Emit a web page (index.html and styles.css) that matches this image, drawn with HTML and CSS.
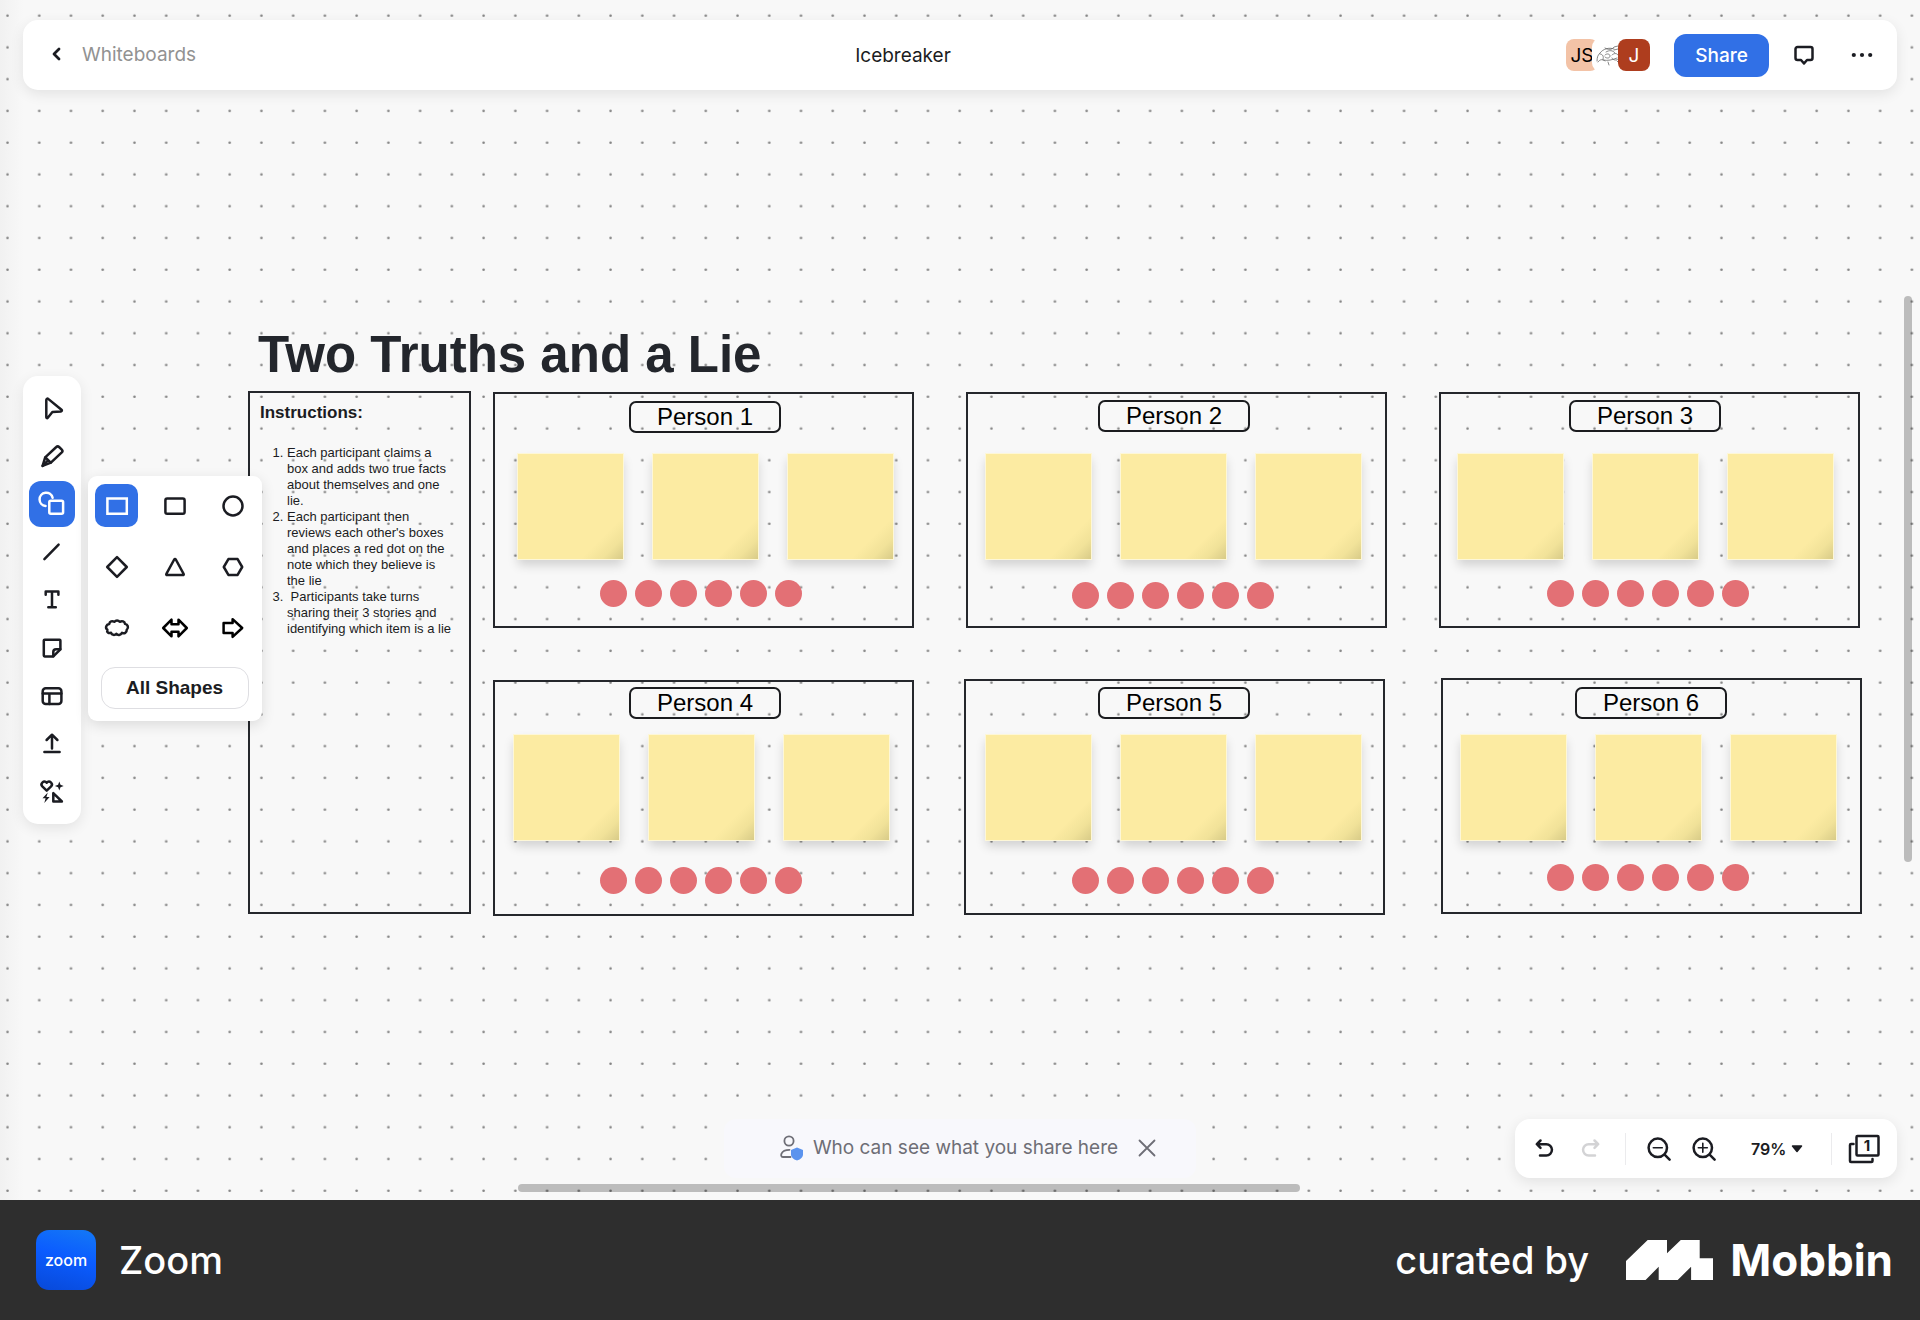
FILE: index.html
```html
<!DOCTYPE html>
<html lang="en">

<head>
    <meta charset="UTF-8">
    <meta name="viewport" content="width=device-width, initial-scale=1.0">
    <title>Icebreaker - Whiteboards</title>
    <link rel="stylesheet" href="styles.css">
</head>

<body>
    <main class="app">
        <!-- Canvas -->
        <div class="canvas">
            <svg class="grid-dots" width="100%" height="100%">
                <defs>
                    <pattern id="dots" width="31.74" height="31.76" patternUnits="userSpaceOnUse">
                        <circle cx="7.5" cy="15.6" r="1.3" fill="#858585" />
                    </pattern>
                </defs>
                <rect width="100%" height="100%" fill="url(#dots)" />
            </svg>

            <h1 class="board-title">Two Truths and a Lie</h1>

            <section class="instructions">
                <h2>Instructions:</h2>
                <ol>
                    <li>Each participant claims a box and adds two true facts about themselves and one lie.</li>
                    <li>Each participant then reviews each other's boxes and places a red dot on the note which they believe is the lie</li>
                    <li>&nbsp;Participants take turns sharing their 3 stories and identifying which item is a lie</li>
                </ol>
            </section>

            <div class="frame frame-1"></div>
            <div class="label label-1">Person 1</div>
            <div class="notes notes-1"><i></i><i></i><i></i></div>
            <div class="votes votes-1"><i></i><i></i><i></i><i></i><i></i><i></i></div>

            <div class="frame frame-2"></div>
            <div class="label label-2">Person 2</div>
            <div class="notes notes-2"><i></i><i></i><i></i></div>
            <div class="votes votes-2"><i></i><i></i><i></i><i></i><i></i><i></i></div>

            <div class="frame frame-3"></div>
            <div class="label label-3">Person 3</div>
            <div class="notes notes-3"><i></i><i></i><i></i></div>
            <div class="votes votes-3"><i></i><i></i><i></i><i></i><i></i><i></i></div>

            <div class="frame frame-4"></div>
            <div class="label label-4">Person 4</div>
            <div class="notes notes-4"><i></i><i></i><i></i></div>
            <div class="votes votes-4"><i></i><i></i><i></i><i></i><i></i><i></i></div>

            <div class="frame frame-5"></div>
            <div class="label label-5">Person 5</div>
            <div class="notes notes-5"><i></i><i></i><i></i></div>
            <div class="votes votes-5"><i></i><i></i><i></i><i></i><i></i><i></i></div>

            <div class="frame frame-6"></div>
            <div class="label label-6">Person 6</div>
            <div class="notes notes-6"><i></i><i></i><i></i></div>
            <div class="votes votes-6"><i></i><i></i><i></i><i></i><i></i><i></i></div>

            <div class="scroll-x"></div>
            <div class="scroll-y"></div>
        </div>

        <header class="topbar panel">
            <div class="topbar-left">
                <a href="#" class="back">
                    <svg width="10" height="16" viewBox="0 0 10 16"><path d="M7 3L2 8l5 5" /></svg>
                    Whiteboards
                </a>
            </div>
            <span class="doc-name">Icebreaker</span>
            <div class="topbar-right">
                <div class="avatars">
                    <span class="avatar avatar-js">JS</span>
                    <span class="avatar avatar-sketch">
                        <svg width="26" height="24" viewBox="0 0 26 24">
                            <path d="M2 18c0-4 1-6 3-8 3-4 9-6 14-4M3 19c2-3 5-3 7-1M10 5c3 2 7 2 9-1l4-1M11 9c3-2 7-2 9 1M10 12c2-2 5-1 5 1s-3 3-5 1M17 12c2-2 5-2 6 0M5 11c3 0 4 3 3 5M8 17c5 1 9 0 14-2M13 19l1 3M17 15c1 2 4 3 6 1M22 18l2 2M19 7l4-1" />
                        </svg>
                    </span>
                    <span class="avatar avatar-j">J</span>
                </div>
                <button type="button" class="share">Share</button>
                <button type="button" class="icon-btn" aria-label="Comments">
                    <svg width="24" height="24" viewBox="0 0 24 24"><path d="M5.500 4h13a2 2 0 0 1 2 2v9a2 2 0 0 1-2 2h-3.500l-3 3.500L9 17H5.500a2 2 0 0 1-2-2V6a2 2 0 0 1 2-2Z" /></svg>
                </button>
                <button type="button" class="icon-btn" aria-label="More">
                    <svg class="solid" width="24" height="24" viewBox="0 0 24 24"><circle cx="3.800" cy="12" r="2.100" /><circle cx="12" cy="12" r="2.100" /><circle cx="20.200" cy="12" r="2.100" /></svg>
                </button>
            </div>
        </header>

        <div class="middle">
            <nav class="toolbar panel">
                <button type="button" aria-label="Select"><svg viewBox="0 0 28 28"><path d="M8.300 6v17.200c0 1 .9 1.200 1.500.5L14.400 18l8.600-.6c1-.1 1.200-1 .5-1.600L10.200 4.900C9.400 4.200 8.300 4.800 8.300 6Z" /></svg></button>
                <button type="button" aria-label="Pen"><svg viewBox="0 0 28 28"><path d="M4.600 23.900l2.600-8.600L18.300 5a2 2 0 0 1 2.800 0l2.700 2.600a2 2 0 0 1 0 2.800L12.900 20.700Z" /><path d="M7.400 15.400l5.300 5.200M4.600 23.900l5.400-5.600" /></svg></button>
                <button type="button" class="active" aria-label="Shapes"><svg viewBox="0 0 28 28"><path d="M14.600 7.800A6.600 6.600 0 1 0 7.600 15.900" /><rect x="11.300" y="10.800" width="13.800" height="13" rx="1.500" /></svg></button>
                <button type="button" aria-label="Line"><svg viewBox="0 0 28 28"><path d="M6.400 21.200L20.600 6.600" /></svg></button>
                <button type="button" aria-label="Text"><svg viewBox="0 0 28 28"><path d="M7.700 8.800V5.400h12.700v3.400M14 5.400v15.800M10.300 21.200h7.500" /></svg></button>
                <button type="button" aria-label="Sticky note"><svg viewBox="0 0 28 28"><path d="M6.600 5.700h15a.8.8 0 0 1 .8.8v8.800l-7.100 7.100H6.600a.8.8 0 0 1-.8-.8V6.500a.8.8 0 0 1 .8-.8Z" /><path d="M15.300 22.300V18a2.800 2.800 0 0 1 2.800-2.800h4.200" /></svg></button>
                <button type="button" aria-label="Template"><svg viewBox="0 0 28 28"><rect x="4.700" y="6.300" width="18.700" height="15.600" rx="3" /><path d="M4.700 11.400h18.700M11.400 11.400v10.500" /></svg></button>
                <button type="button" aria-label="Upload"><svg viewBox="0 0 28 28"><path d="M14 5v13.500M8.600 10L14 4.700l5.400 5.300M6.400 22h15.200" /></svg></button>
                <button type="button" aria-label="Stickers"><svg viewBox="0 0 28 28"><path d="M8.700 12.600L4.300 8.400C1.800 5.600 6 1.600 8.700 4.700c2.700-3.100 6.900.9 4.400 3.700Z" /><path class="fill" d="M21.300 3.600l1.200 3.200 3.200 1.200-3.200 1.200-1.200 3.200-1.200-3.200L16.900 8l3.200-1.200ZM9.800 14.600l-5.300 5.700h3.100l-1.300 4.600 5.300-6h-3.200Z" /><path d="M15.300 15.100v8.400h8.600Z" /></svg></button>

                <div class="shapes">
                    <div class="shapes-grid">
                        <button type="button" class="active" aria-label="Rectangle"><svg viewBox="0 0 28 28"><path d="M4.400 6.600h19.400v15.200H4.400Z" stroke-linejoin="miter" /></svg></button>
                        <button type="button" aria-label="Rounded rectangle"><svg viewBox="0 0 28 28"><rect x="4.400" y="6.600" width="19.200" height="15.200" rx="1.800" /></svg></button>
                        <button type="button" aria-label="Circle"><svg viewBox="0 0 28 28"><circle cx="14" cy="14" r="9.500" /></svg></button>
                        <button type="button" aria-label="Diamond"><svg viewBox="0 0 28 28"><path d="M14 4.200l9.800 9.800-9.800 9.800L4.200 14Z" /></svg></button>
                        <button type="button" aria-label="Triangle"><svg viewBox="0 0 28 28"><path d="M13.200 6.500L5.400 20.800c-.4.700 0 1.200.8 1.200h15.600c.8 0 1.200-.5.8-1.200L14.800 6.500c-.4-.7-1.200-.7-1.600 0Z" /></svg></button>
                        <button type="button" aria-label="Hexagon"><svg viewBox="0 0 28 28"><path d="M9.400 6.100h9.200L23.200 14l-4.600 7.900H9.400L4.800 14Z" /></svg></button>
                        <button type="button" aria-label="Cloud"><svg viewBox="0 0 28 28"><path d="M6.300 9.900c.3-2.700 3-3.400 5-2.100 1.600-1.700 4-1.700 5.400 0 2.300-1.300 5-.4 5.300 2.100 2.700.6 4.200 3.600 1.700 6 .2 2.800-2.500 4.200-4.700 2.900-1.400 2.500-4.200 2.800-5.600 1-1.800 1.700-4.400 1.400-5.400-1-2.500.9-4.500-.7-3.600-3-2.400-1.900-1.400-5.500 1.900-5.900Z" /></svg></button>
                        <button type="button" aria-label="Double arrow"><svg class="dark" viewBox="0 0 28 28"><path d="M2.200 14l8.300-8.300v4.600h7V5.700l8.300 8.300-8.300 8.300v-4.600h-7v4.600Z" /></svg></button>
                        <button type="button" aria-label="Arrow"><svg class="dark" viewBox="0 0 28 28"><path d="M4.600 8.900h9V5.200l9.600 8.800-9.600 8.800v-3.700h-9Z" /></svg></button>
                    </div>
                    <button type="button" class="all-shapes">All Shapes</button>
                </div>
            </nav>
        </div>

        <div class="bottom">
            <div class="notice">
                <svg width="24" height="26" viewBox="0 0 24 26">
                    <circle cx="9" cy="6" r="4.600" />
                    <path d="M10.500 22H2.800C1 22 .9 20 1.500 18.600 2.600 16 5.600 14.800 9.500 14.800" />
                    <path class="shield" d="M17 12.500l6 2.500v4.300c0 3.400-3 5.500-6 6.200-3-.7-6-2.800-6-6.200V15Z" />
                </svg>
                <span>Who can see what you share here</span>
                <button type="button" aria-label="Close"><svg width="18" height="18" viewBox="0 0 18 18"><path d="M1.500 1.500l15 15M16.500 1.500l-15 15" /></svg></button>
            </div>

            <div class="controls panel">
                <button type="button" class="icon-btn" aria-label="Undo"><svg width="24" height="24" viewBox="0 0 24 24"><path d="M7.500 3.500L3.800 7.200l3.700 3.700M4 7.200h9.300a5.600 5.600 0 0 1 0 11.300H7" /></svg></button>
                <button type="button" class="icon-btn" aria-label="Redo" disabled><svg width="24" height="24" viewBox="0 0 24 24"><path d="M16.500 3.500l3.700 3.700-3.700 3.700M20 7.200h-9.300a5.600 5.600 0 0 0 0 11.300H17" /></svg></button>
                <span class="divider"></span>
                <button type="button" class="icon-btn" aria-label="Zoom out"><svg width="24" height="24" viewBox="0 0 24 24"><circle cx="10.800" cy="10.800" r="9.200" /><path d="M17.600 17.600l5 5" /><path class="thin" d="M6.300 10.800h9" /></svg></button>
                <button type="button" class="icon-btn" aria-label="Zoom in"><svg width="24" height="24" viewBox="0 0 24 24"><circle cx="10.800" cy="10.800" r="9.200" /><path d="M17.600 17.600l5 5" /><path class="thin" d="M6.300 10.800h9M10.800 6.300v9" /></svg></button>
                <label class="zoom-level">
                    <select aria-label="Zoom level">
                        <option>79%</option>
                        <option>100%</option>
                    </select>
                    <svg width="12" height="8" viewBox="0 0 12 8"><path d="M1.500 1h9L6 6.500Z" /></svg>
                </label>
                <span class="divider"></span>
                <button type="button" class="pages" aria-label="Pages">
                    <svg width="32" height="30" viewBox="0 0 32 30"><rect x="8.500" y="2" width="22" height="19.500" rx="1" /><path d="M5.500 10H3a1 1 0 0 0-1 1v16a1 1 0 0 0 1 1h20.500a1 1 0 0 0 1-1v-2" /></svg>
                    <span>1</span>
                </button>
            </div>
        </div>
    </main>

    <footer class="footer">
        <div class="brand">
            <span class="brand-logo">zoom</span>
            <span class="brand-name">Zoom</span>
        </div>
        <div class="credit">
            <span class="credit-by">curated by</span>
            <svg width="87" height="40" viewBox="0 0 87 40"><path d="M0 21L21.700 0H41v13.300L54.800 0h18.900v18.300H87V40H65.100V26.700L51.700 40h-19V26.700L19.600 40H0Z" /></svg>
            <span class="credit-name">Mobbin</span>
        </div>
    </footer>
</body>

</html>
```
FILE: styles.css
```css
* {
    box-sizing: border-box;
}

body {
    margin: 0;
    min-height: 100vh;
    display: flex;
    flex-direction: column;
    font-family: Inter, "Liberation Sans", sans-serif;
    color: #1b1c22;
}

button {
    border: none;
    background: none;
    padding: 0;
    font-family: inherit;
    color: inherit;
    cursor: pointer;
}

svg {
    display: block;
    fill: none;
    stroke: #1b1c22;
    stroke-width: 2.5;
    stroke-linecap: round;
    stroke-linejoin: round;
}

.app {
    flex: 1;
    position: relative;
    display: flex;
    flex-direction: column;
    padding: 20px 23px 22px;
    background: linear-gradient(to right, #f1f1f1, #f8f8f8 24px);
    overflow: hidden;
}

.panel {
    position: relative;
    background: #fff;
    border-radius: 15px;
    box-shadow: 0 4px 14px rgba(0, 0, 0, 0.09);
}

/* Top bar */
.topbar {
    display: flex;
    align-items: center;
    height: 70px;
    padding: 0 23px 0 29px;
    font-size: 19px;
}

.topbar-left {
    flex: 1;
}

.topbar-right {
    flex: 1;
    display: flex;
    align-items: center;
    justify-content: flex-end;
    margin-left: 120px;
}

.back {
    display: inline-flex;
    align-items: center;
    gap: 20px;
    color: #929292;
    text-decoration: none;
}

.back svg {
    stroke-width: 2.8;
}

.avatars {
    display: flex;
    margin-right: 24px;
}

.avatar {
    display: flex;
    align-items: center;
    justify-content: center;
    width: 32px;
    height: 32px;
    margin-left: -6px;
    border-radius: 8px;
    overflow: hidden;
}

.avatar-js {
    background: #f3c3a7;
    color: #000;
}

.avatar-sketch {
    background: #fff;
}

.avatar-sketch svg {
    stroke: #555;
    stroke-width: 0.7;
}

.avatar-j {
    background: #ae3d1e;
    color: #fff;
}

.share {
    width: 95px;
    height: 43px;
    margin-right: 23px;
    border-radius: 12px;
    background: #3170e6;
    color: #fff;
    font-size: 19px;
    font-weight: 500;
}

.icon-btn + .icon-btn {
    margin-left: 34px;
}

.topbar .icon-btn .solid {
    fill: #1b1c22;
    stroke: none;
}

/* Tools */
.middle {
    flex: 1;
    display: flex;
    align-items: center;
    padding-bottom: 9px;
}

.toolbar {
    display: flex;
    flex-direction: column;
    gap: 2px;
    padding: 9px 6px;
}

.toolbar > button {
    width: 46px;
    height: 46px;
    border-radius: 12px;
}

.toolbar button svg {
    width: 28px;
    height: 28px;
    margin: 0 auto;
}

.toolbar .active {
    background: #3170e6;
}

.toolbar .active svg {
    stroke: #fff;
}

.toolbar .fill {
    fill: #1b1c22;
    stroke: none;
}

.toolbar .dark {
    stroke: #000;
}

.shapes {
    position: absolute;
    left: 65px;
    top: 100px;
    width: 174px;
    padding: 8px 8px 12px 7px;
    background: #fff;
    border-radius: 9px;
    box-shadow: 0 4px 14px rgba(0, 0, 0, 0.12);
}

.shapes-grid {
    display: grid;
    grid-template-columns: repeat(3, 43px);
    gap: 18px 15px;
    margin-bottom: 18px;
}

.shapes-grid button {
    height: 43px;
    border-radius: 10px;
}

.all-shapes {
    display: block;
    width: 148px;
    height: 42px;
    margin: 0 auto;
    border: 1px solid #dedee2;
    border-radius: 14px;
    font-family: "Liberation Sans", Arial, sans-serif;
    font-size: 19px;
    font-weight: bold;
}

/* Bottom row */
.bottom {
    position: relative;
    display: grid;
    grid-template-columns: 1fr auto 1fr;
    align-items: center;
}

.notice {
    grid-column: 2;
    display: flex;
    align-items: center;
    height: 59px;
    padding: 0 40px 2px 56px;
    background: #f8f8fc;
    border-radius: 12px;
    font-size: 19px;
    color: #6e6e76;
}

.notice svg {
    stroke: #6e6e76;
    stroke-width: 1.8;
}

.notice .shield {
    fill: #5b93ee;
    stroke: none;
}

.notice span {
    margin: 0 20px 0 9px;
}

.controls {
    justify-self: end;
    display: flex;
    align-items: center;
    height: 59px;
    padding: 0 17px 0 18px;
}

.controls .icon-btn + .icon-btn {
    margin-left: 21px;
}

.controls .icon-btn:disabled svg {
    stroke: #d3d3d5;
}

.controls .thin {
    stroke-width: 1.6;
}

.divider {
    width: 1px;
    height: 32px;
    margin: 0 21px 0 23px;
    background: #ebebed;
}

.zoom-level {
    display: flex;
    align-items: center;
    gap: 4px;
    margin: 0 5px 0 35px;
}

.zoom-level select {
    appearance: none;
    width: 36px;
    padding: 0;
    border: none;
    background: none;
    font-family: inherit;
    font-size: 16px;
    font-weight: 600;
    color: inherit;
}

.zoom-level svg {
    fill: #1b1c22;
    stroke-width: 1.5;
}

.controls .divider:nth-of-type(2) {
    margin: 0 16px 0 23px;
}

.pages {
    position: relative;
}

.pages span {
    position: absolute;
    left: 8px;
    top: 2px;
    width: 22px;
    font-size: 15px;
    line-height: 20px;
    font-weight: 700;
    text-align: center;
}

/* Canvas items */
.canvas {
    position: absolute;
    inset: 0;
    font-family: "Liberation Sans", Arial, sans-serif;
}

.grid-dots {
    stroke: none;
}

.board-title,
.instructions,
.frame,
.label,
.notes,
.votes,
.scroll-x,
.scroll-y {
    position: absolute;
}

.board-title {
    left: 258px;
    top: 325px;
    margin: 0;
    font-size: 51px;
    line-height: 60px;
    color: #23262c;
    white-space: nowrap;
}

.instructions {
    left: 248px;
    top: 391px;
    width: 223px;
    height: 523px;
    padding: 10px;
    border: 2px solid #25272c;
}

.instructions h2 {
    margin: 0 0 22px;
    font-size: 17px;
    line-height: 20px;
}

.instructions ol {
    width: 194px;
    margin: 0;
    padding-left: 27px;
    font-size: 13px;
    line-height: 16px;
}

.frame {
    width: 421px;
    height: 236px;
    border: 2px solid #25272c;
}

.label {
    width: 152px;
    height: 32px;
    border: 2px solid #1b1c1f;
    border-radius: 7px;
    font-size: 24px;
    line-height: 28px;
    text-align: center;
    color: #000;
}

.notes {
    display: flex;
    gap: 30px;
}

.notes i {
    width: 105px;
    height: 105px;
    background: linear-gradient(135deg, #fceba2 80%, #f1e299 90%, #d8cb88);
    box-shadow: 0 0 0 1px #fdf7d8, 0 6px 10px rgba(0, 0, 0, 0.16);
}

.votes {
    display: flex;
    gap: 8px;
}

.votes i {
    width: 27px;
    height: 27px;
    border-radius: 50%;
    background: #e37075;
}

.frame-1 { left: 493px; top: 392px; }
.label-1 { left: 629px; top: 401px; }
.notes-1 { left: 518px; top: 454px; }
.votes-1 { left: 600px; top: 580px; }

.frame-2 { left: 966px; top: 392px; }
.label-2 { left: 1098px; top: 400px; }
.notes-2 { left: 986px; top: 454px; }
.votes-2 { left: 1072px; top: 582px; }

.frame-3 { left: 1439px; top: 392px; }
.label-3 { left: 1569px; top: 400px; }
.notes-3 { left: 1458px; top: 454px; }
.votes-3 { left: 1547px; top: 580px; }

.frame-4 { left: 493px; top: 680px; }
.label-4 { left: 629px; top: 687px; }
.notes-4 { left: 514px; top: 735px; }
.votes-4 { left: 600px; top: 867px; }

.frame-5 { left: 964px; top: 679px; }
.label-5 { left: 1098px; top: 687px; }
.notes-5 { left: 986px; top: 735px; }
.votes-5 { left: 1072px; top: 867px; }

.frame-6 { left: 1441px; top: 678px; }
.label-6 { left: 1575px; top: 687px; }
.notes-6 { left: 1461px; top: 735px; }
.votes-6 { left: 1547px; top: 864px; }

.scroll-x,
.scroll-y {
    border-radius: 4px;
    background: rgba(0, 0, 0, 0.24);
}

.scroll-x {
    left: 27%;
    right: 620px;
    bottom: 8px;
    height: 8px;
}

.scroll-y {
    top: 296px;
    bottom: 338px;
    right: 8px;
    width: 8px;
}

/* Footer */
.footer {
    display: flex;
    align-items: center;
    justify-content: space-between;
    height: 120px;
    padding: 0 27px 0 36px;
    background: #2e2e2e;
    color: #fff;
}

.brand,
.credit {
    display: flex;
    align-items: center;
}

.brand-logo {
    display: flex;
    align-items: center;
    justify-content: center;
    width: 60px;
    height: 60px;
    margin-right: 23px;
    border-radius: 13px;
    background: linear-gradient(195deg, #1479f5, #0b5cff 45%, #0849d8);
    font-size: 16px;
    font-weight: 500;
}

.brand-name,
.credit-by {
    font-size: 38px;
    font-weight: 500;
}

.credit svg {
    margin: 0 17px 0 37px;
    fill: #fff;
    stroke: none;
}

.credit-name {
    font-size: 44px;
    font-weight: 700;
}
```
